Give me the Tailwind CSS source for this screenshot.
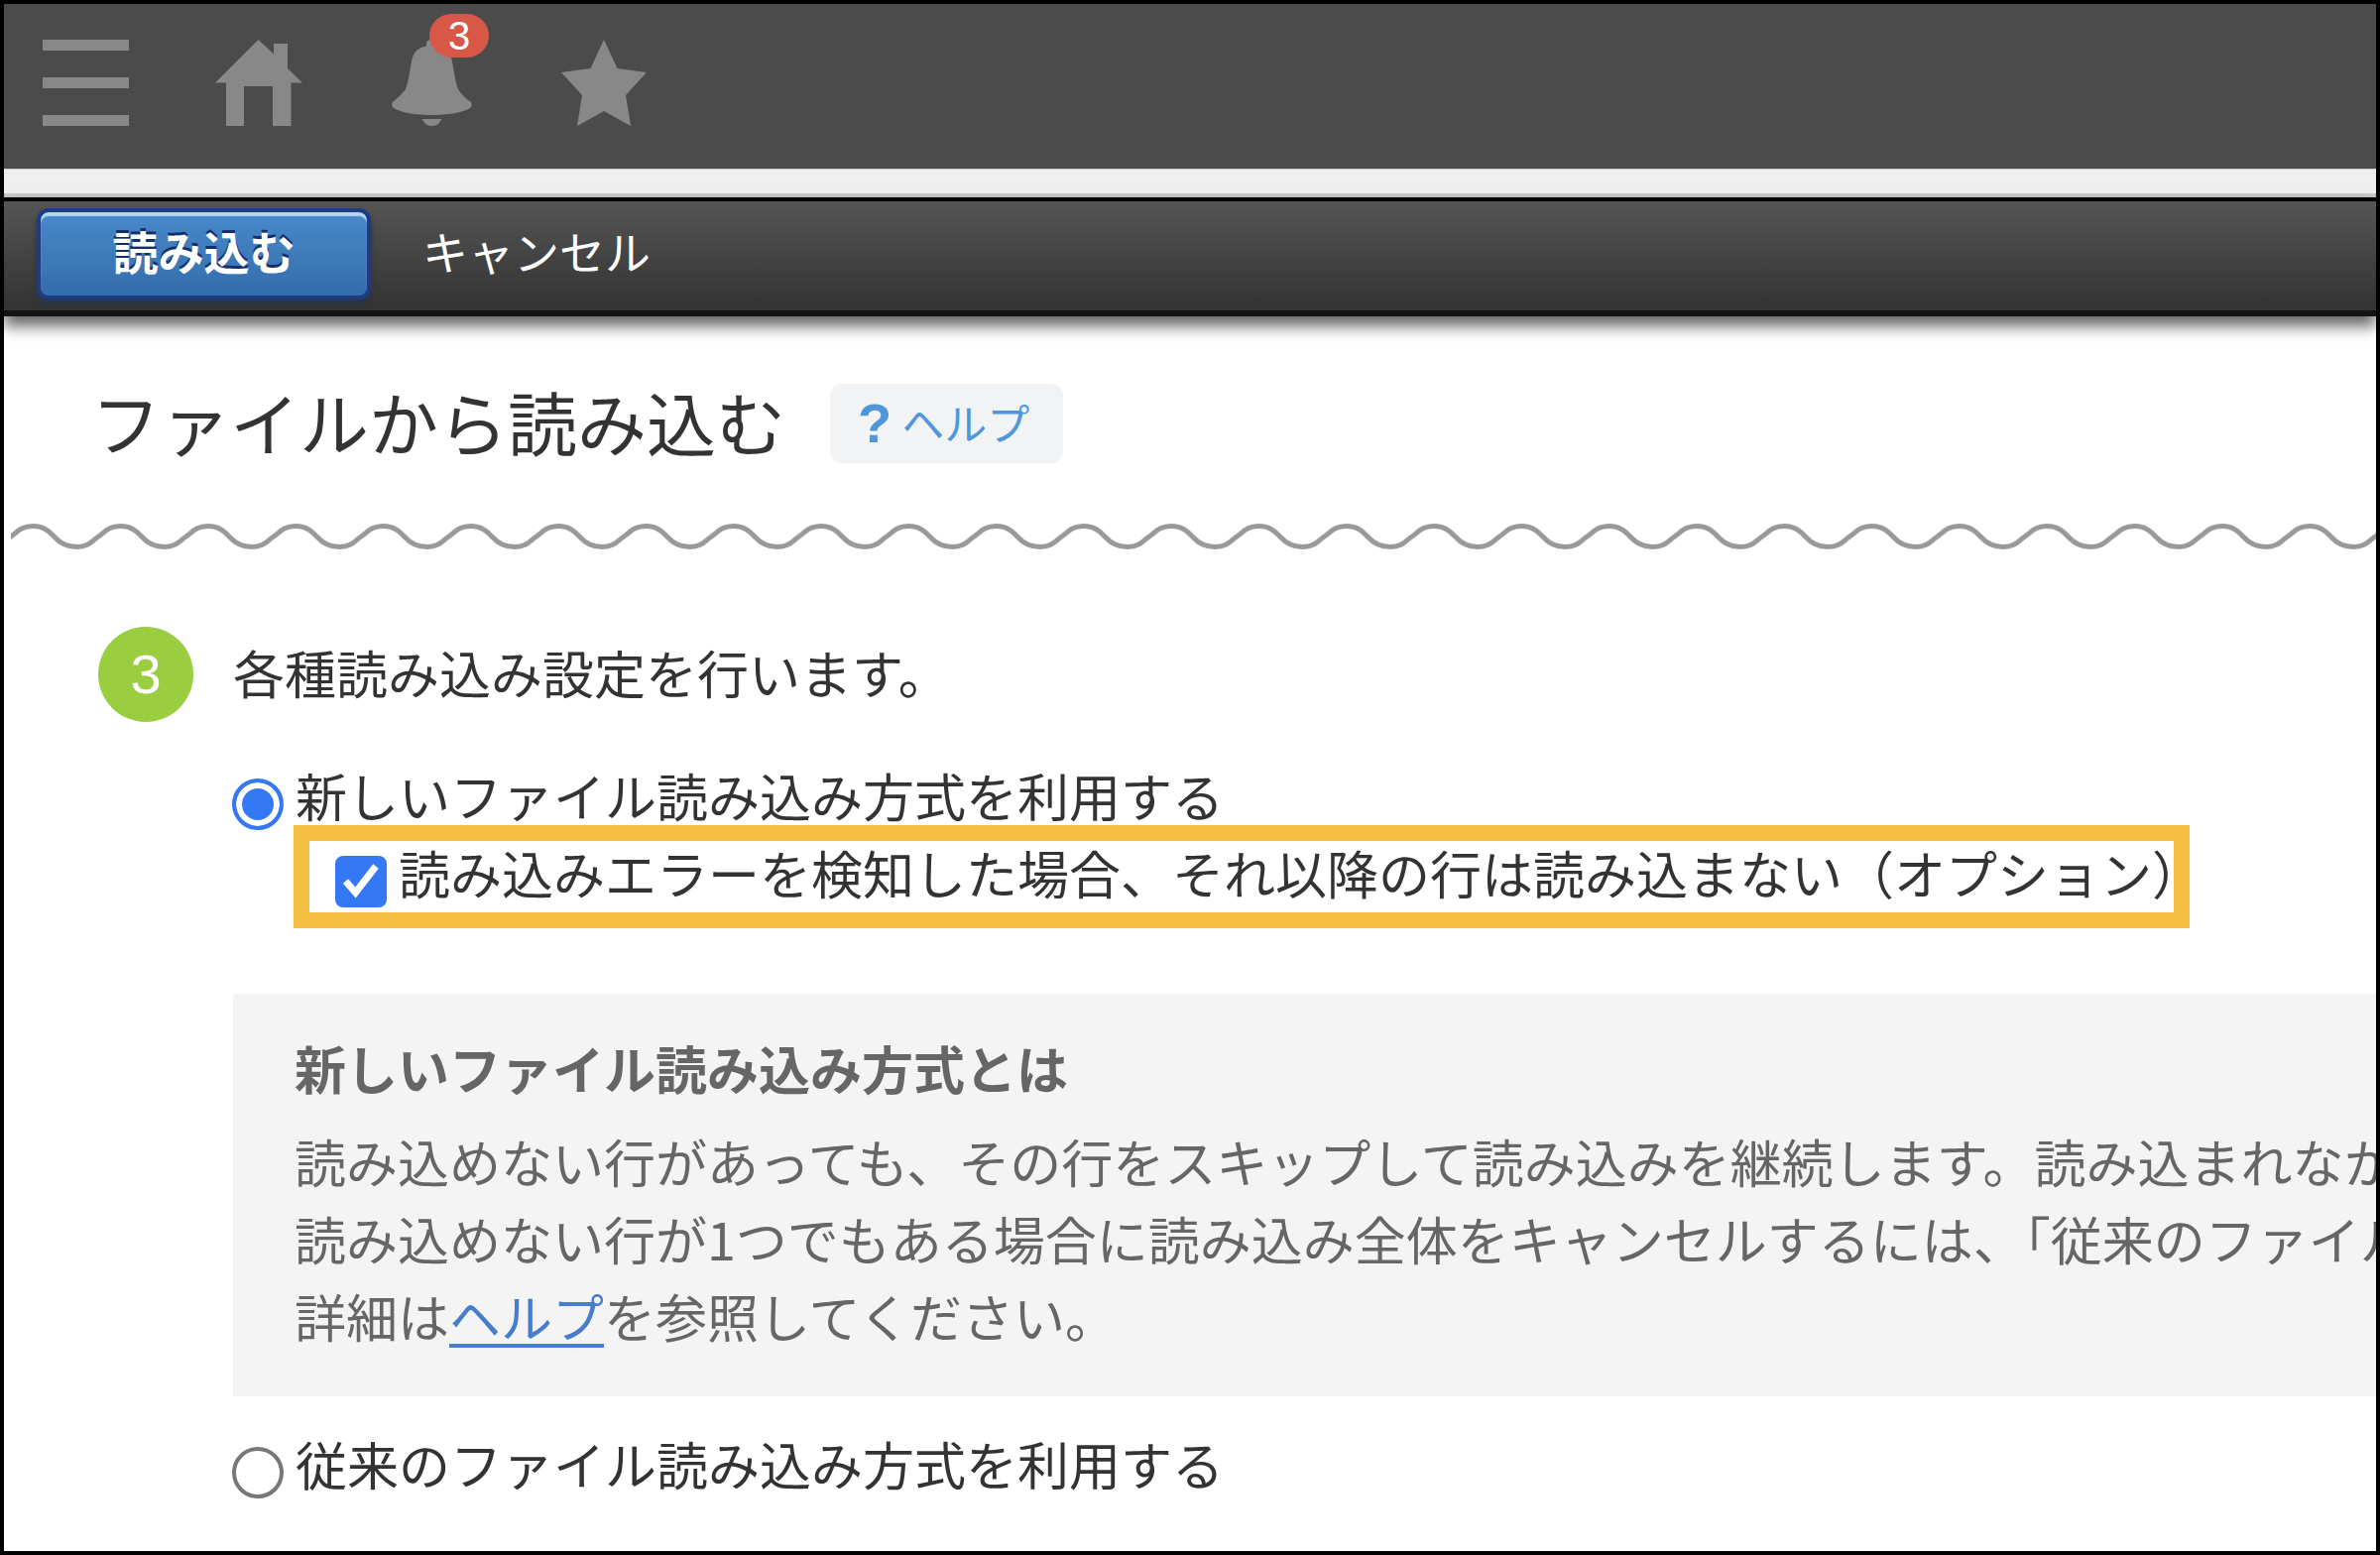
<!DOCTYPE html>
<html lang="ja">
<head>
    <meta charset="UTF-8">
    <title>ファイルから読み込む</title>
    <script src="https://cdn.jsdelivr.net/npm/@tailwindcss/browser@4"></script>
</head>
<body class="min-h-screen overflow-x-hidden border-4 border-black bg-white font-['Noto_Sans_CJK_JP',sans-serif] text-[52px] text-[#333]">
    <!-- Global navigation -->
    <header class="bg-[#4b4b4b] pt-9 pb-[42px] pl-[39px]">
        <nav class="flex gap-[86px] text-[#888]">
            <button type="button" aria-label="メニュー" class="w-[88px]">
                <svg class="h-[88px] w-[88px]" viewBox="0 0 88 88" fill="currentColor">
                    <path d="M0 0h87v11H0zM0 38h87v11H0zM0 76h87v11H0z"/>
                </svg>
            </button>
            <a href="#" aria-label="ポータル" class="w-[88px]">
                <svg class="h-[88px] w-[88px]" viewBox="0 0 88 88" fill="currentColor">
                    <path d="M43.500 0L59 14.500V4h14v25l15 14.500H76.500V87H58V47H29v40H11V43.500H0z"/>
                </svg>
            </a>
            <button type="button" aria-label="通知" class="relative w-[88px]">
                <svg class="h-[88px] w-[88px]" viewBox="-4 0 88 88" fill="currentColor">
                    <path d="M35 4C35 1.500 37 0 40.500 0S46 1.500 46 4v2.500C55 8 59.500 13 61 22c2.500 13 3 20 6 28 4 6 8 10 12 12 2.500 2 2 5 0 7C70 74 56 76 40.500 76S11 74 2 69c-2-2-2.500-5 0-7 4-3 8-7 12-12 3-8 3.500-15 6-28 1.500-9 6-14 15-15.500z"/>
                    <path d="M30.500 80h20c-2.500 4.500-5 7-10 7s-7.500-2.500-10-7z"/>
                </svg>
                <span class="absolute -top-[26px] left-[42px] h-11 w-[60px] rounded-[22px] bg-[#d75847] text-center font-['Liberation_Sans',sans-serif] text-[40px] leading-[44px] text-white">3</span>
            </button>
            <button type="button" aria-label="お気に入り" class="w-[88px]">
                <svg class="h-[88px] w-[88px]" viewBox="-1 0 88 88" fill="currentColor">
                    <path d="M43 0L56.500 29 86 33 65 56l5 31-27-15-27 15 5-31L0 33l29.500-4z"/>
                </svg>
            </button>
        </nav>
    </header>
    <div class="h-[29px] border-t border-b-4 border-[#c8c8c8] bg-[#efefef]"></div>

    <!-- Action toolbar -->
    <div class="flex items-start gap-[52px] border-t-4 border-b-6 border-t-black border-b-[#141414] bg-linear-to-b from-[#555] to-[#333] pt-[7px] pb-[11px] pl-[33px] text-[46px] text-white shadow-[0_10px_14px_rgba(0,0,0,0.6)]">
        <button type="submit" form="import" class="w-[337px] rounded-xl border-4 border-[#1f3b85] bg-linear-to-b from-[#488aca] to-[#356cab] pb-2 leading-[76px] font-bold shadow-[inset_0_4px_1px_#b4d5f0,0_6px_6px_#2a3644] text-shadow-[0_-3px_0_#142f70]">読み込む</button>
        <button type="button" class="leading-[84px]">キャンセル</button>
    </div>

    <main class="pt-[68px]">
        <div class="flex items-center gap-[45px] pl-[88px]">
            <h1 class="pb-1 text-[70px] leading-[76px]">ファイルから読み込む</h1>
            <a href="#" class="flex items-center gap-[10px] rounded-xl bg-[#f1f3f5] pr-[34px] pl-7 text-[43px] leading-[80px] text-[#4f97d9]">
                <span class="font-['Liberation_Sans',sans-serif] text-[56px] font-bold">?</span>
                <span class="pb-1 leading-[76px]">ヘルプ</span>
            </a>
        </div>

        <svg class="mt-[60px] ml-[7px] h-7 w-full" aria-hidden="true">
            <defs>
                <pattern id="wave" width="88.300" height="28" patternUnits="userSpaceOnUse">
                    <path d="M-22 25.500C-8 25.500-6 18 0 14S10 3.500 22 3.500 40 10 44 14.500 54 24.500 66.500 24.500 82 18 88.300 14 98 3.500 110 3.500" fill="none" stroke="#999" stroke-width="5"/>
                </pattern>
            </defs>
            <rect width="100%" height="28" fill="url(#wave)"/>
        </svg>

        <form id="import" class="pt-[77px] pl-[95px]">
            <div class="flex items-center gap-[40px]">
                <span class="h-24 w-24 rounded-full bg-[#9acd3f] text-center font-['Liberation_Sans',sans-serif] text-[56px] leading-[96px] text-white">3</span>
                <h2 class="pb-1 leading-[92px]">各種読み込み設定を行います。</h2>
            </div>

            <div class="pt-[50px] pl-[135px]">
                <label class="flex w-fit gap-3">
                    <input type="radio" name="method" checked class="mt-[7px] h-[52px] w-[52px] appearance-none rounded-full border-4 border-[#777] checked:border-[#3478f6] checked:bg-[#3478f6] checked:shadow-[inset_0_0_0_6px_#fff]">
                    <span class="leading-[48px]">新しいファイル読み込み方式を利用する</span>
                </label>

                <div class="-mt-[5px] ml-[62px] w-fit border-16 border-[#f5bf42] pt-2 pb-[5px] pl-[26px]">
                    <label class="-mr-[30px] flex gap-3 whitespace-nowrap">
                        <span class="mt-[7px] grid">
                            <input type="checkbox" checked class="peer col-start-1 row-start-1 h-[52px] w-[52px] appearance-none rounded-lg border-4 border-[#777] checked:border-[#3478f6] checked:bg-[#3478f6]">
                            <svg class="pointer-events-none invisible col-start-1 row-start-1 h-[52px] w-[52px] peer-checked:visible" viewBox="0 0 52 52" fill="none" stroke="#fff" stroke-width="7">
                                <path d="M10.500 25.500L20.500 37 41 10.500"/>
                            </svg>
                        </span>
                        <span class="leading-[48px]">読み込みエラーを検知した場合、それ以降の行は読み込まない（オプション）</span>
                    </label>
                </div>

                <section class="mt-[66px] ml-px overflow-hidden bg-[#f4f4f4] pt-9 pb-[42px] pl-[62px] leading-[78px] whitespace-nowrap text-[#666]">
                    <h3 class="mb-4 font-bold">新しいファイル読み込み方式とは</h3>
                    <p>読み込めない行があっても、その行をスキップして読み込みを継続します。読み込まれなか</p>
                    <p>読み込めない行が1つでもある場合に読み込み全体をキャンセルするには、「従来のファイル</p>
                    <p>詳細は<a href="#" class="text-[#477dca] underline decoration-4 underline-offset-[6px]">ヘルプ</a>を参照してください。</p>
                </section>

                <label class="mt-[44px] flex w-fit gap-3">
                    <input type="radio" name="method" class="mt-[7px] h-[52px] w-[52px] appearance-none rounded-full border-4 border-[#777] checked:border-[#3478f6] checked:bg-[#3478f6] checked:shadow-[inset_0_0_0_6px_#fff]">
                    <span class="leading-[48px]">従来のファイル読み込み方式を利用する</span>
                </label>
            </div>
        </form>
    </main>
</body>
</html>
